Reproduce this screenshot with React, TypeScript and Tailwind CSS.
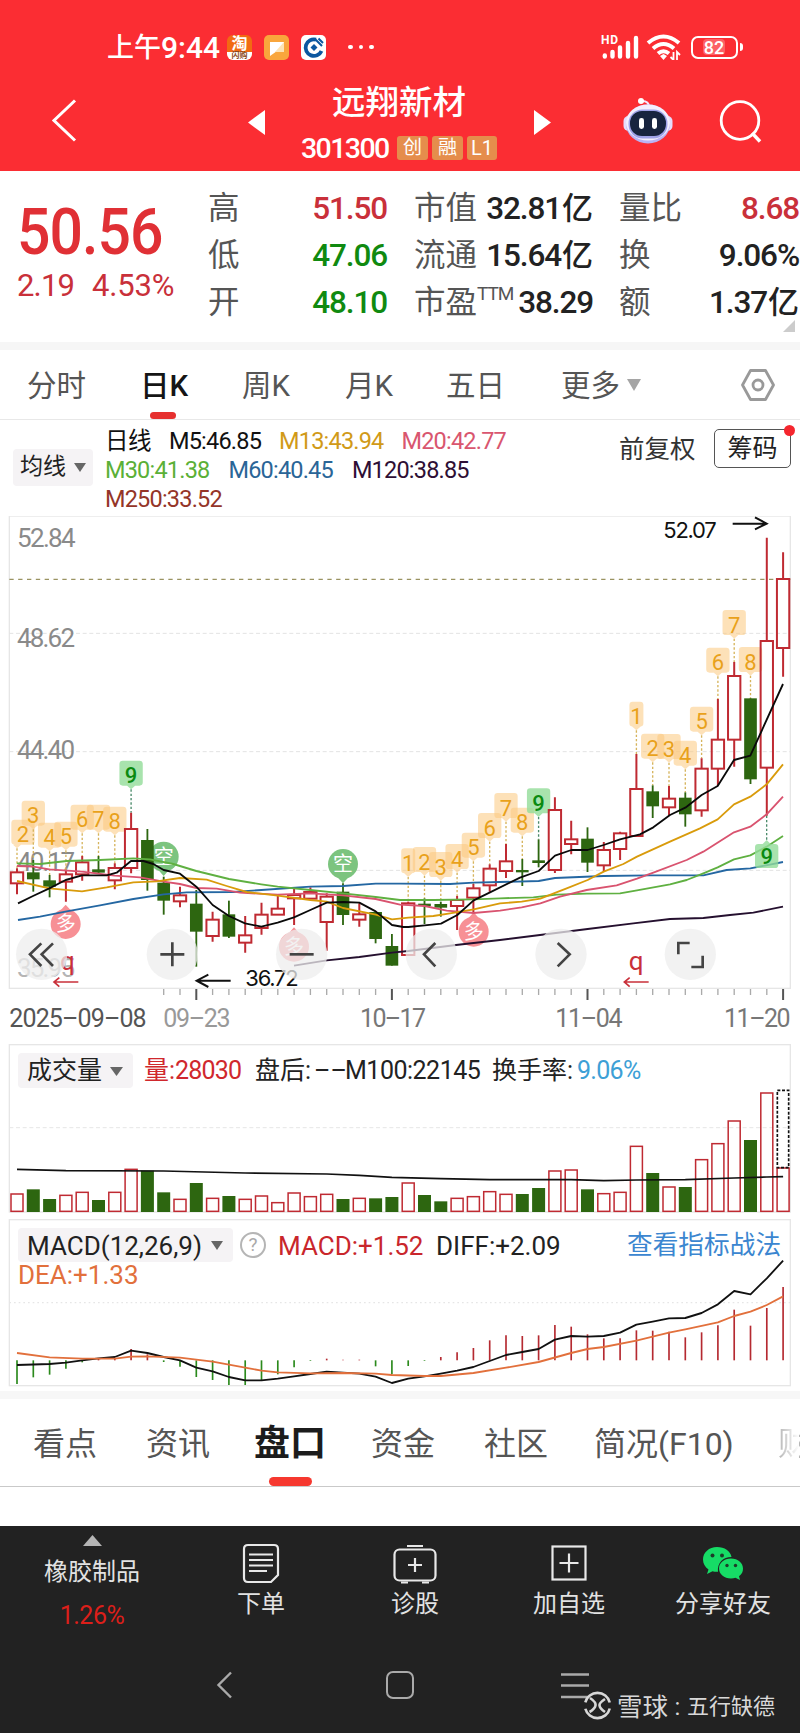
/**
 * 个股行情页：日K、成交量、MACD
 */

type Point = [number, number];

// 图表坐标统一用 3 倍像素
const STEP = 48.9;
const cx = (i: number) => 51 + STEP * i;
const RED = '#bf2a32';
const GREEN = '#2d6610';

// [方向, 实体上, 实体下, 影线上, 影线下]
const candles: [number, number, number, number, number][] = [
  [1, 277, 310, 265, 343],
  [0, 277, 298, 240, 335],
  [0, 301, 320, 285, 352],
  [1, 283, 305, 270, 365],
  [1, 247, 283, 228, 302],
  [0, 268, 278, 228, 280],
  [1, 264, 301, 250, 328],
  [1, 147, 264, 98, 280],
  [0, 180, 300, 147, 332],
  [0, 308, 362, 290, 404],
  [1, 346, 364, 320, 382],
  [0, 371, 455, 330, 560],
  [1, 419, 468, 395, 485],
  [0, 403, 470, 362, 474],
  [1, 466, 488, 408, 518],
  [1, 404, 444, 368, 464],
  [1, 386, 404, 345, 404],
  [1, 345, 355, 325, 435],
  [1, 336, 356, 322, 356],
  [1, 350, 426, 340, 512],
  [0, 335, 405, 310, 435],
  [1, 403, 419, 370, 440],
  [0, 396, 477, 396, 490],
  [0, 498, 557, 462, 557],
  [1, 370, 525, 365, 525],
  [0, 371, 378, 355, 432],
  [0, 372, 383, 365, 410],
  [1, 360, 378, 348, 450],
  [1, 325, 353, 312, 400],
  [1, 266, 316, 253, 335],
  [1, 244, 273, 192, 294],
  [0, 270, 277, 237, 318],
  [0, 241, 249, 178, 262],
  [1, 90, 270, 52, 279],
  [1, 178, 192, 122, 223],
  [0, 176, 248, 142, 276],
  [1, 210, 256, 186, 275],
  [1, 160, 207, 155, 240],
  [1, 27, 168, -78, 170],
  [0, 34, 79, 16, 114],
  [1, 56, 82, 18, 107],
  [0, 53, 103, 37, 140],
  [1, -34, 91, -65, 110],
  [1, -121, -34, -243, 17],
  [1, -312, -121, -354, -40],
  [0, -245, -2, -245, 12],
  [1, -417, -37, -727, 107],
  [1, -603, -396, -683, -310],
];

const averages: { color: string; points: Point[] }[] = [
  {
    color: '#2467a2',
    points: [[54, 420], [120, 410], [200, 394], [300, 376], [400, 357], [491, 343], [560, 337], [700, 336], [784, 330], [931, 320], [1029, 318], [1127, 311], [1200, 311], [1350, 312], [1421, 308], [1500, 306], [1616, 303], [1665, 294], [1811, 288], [1950, 286], [2110, 286], [2180, 270], [2251, 265], [2310, 254], [2349, 246]],
  },
  {
    color: '#25102f',
    points: [[882, 557], [980, 541], [1078, 531], [1176, 518], [1225, 513], [1368, 495], [1500, 480], [1620, 465], [1763, 447], [1900, 430], [2010, 417], [2110, 414], [2190, 405], [2260, 398], [2349, 380]],
  },
  {
    color: '#5fb041',
    points: [[51, 250], [120, 252], [200, 243], [300, 240], [400, 235], [450, 238], [520, 252], [589, 273], [687, 297], [784, 313], [833, 320], [931, 330], [1029, 340], [1127, 351], [1200, 360], [1300, 360], [1421, 358], [1500, 355], [1600, 352], [1670, 344], [1760, 341], [1860, 340], [1911, 331], [2010, 313], [2060, 300], [2110, 280], [2153, 262], [2202, 238], [2251, 226], [2300, 200], [2349, 168]],
  },
  {
    color: '#d9536f',
    points: [[51, 258], [100, 260], [148, 268], [246, 275], [344, 287], [420, 292], [491, 305], [540, 312], [589, 324], [650, 326], [720, 338], [833, 344], [931, 340], [1029, 346], [1127, 357], [1200, 374], [1274, 378], [1340, 392], [1421, 399], [1500, 392], [1565, 382], [1621, 370], [1680, 350], [1760, 330], [1850, 316], [1911, 296], [1960, 278], [2060, 240], [2110, 215], [2202, 157], [2251, 140], [2300, 103], [2349, 50]],
  },
  {
    color: '#d99b0b',
    points: [[51, 303], [148, 325], [246, 334], [320, 322], [400, 307], [470, 304], [540, 294], [620, 299], [680, 318], [740, 336], [833, 347], [931, 360], [980, 365], [1029, 384], [1127, 404], [1176, 418], [1225, 413], [1300, 408], [1350, 400], [1421, 388], [1500, 370], [1565, 365], [1621, 356], [1700, 325], [1763, 300], [1811, 275], [1870, 252], [1911, 230], [2010, 185], [2100, 145], [2153, 118], [2202, 73], [2251, 50], [2300, 13], [2349, -47]],
  },
  {
    color: '#0a0a0a',
    points: [[54, 370], [99, 348], [148, 325], [197, 300], [246, 286], [320, 286], [350, 278], [393, 243], [430, 243], [460, 252], [491, 270], [540, 281], [589, 320], [638, 375], [687, 408], [735, 430], [784, 440], [833, 428], [882, 412], [931, 390], [980, 368], [1029, 366], [1078, 368], [1127, 394], [1176, 435], [1210, 441], [1225, 441], [1274, 436], [1323, 431], [1372, 405], [1421, 361], [1470, 337], [1560, 293], [1616, 273], [1665, 227], [1714, 210], [1763, 210], [1811, 195], [1860, 178], [1920, 163], [1960, 142], [2010, 105], [2056, 83], [2105, 45], [2153, 18], [2202, -60], [2251, -73], [2349, -288]],
  },
];

// 九转序列 [K线序号, 数字, 气泡上沿]
const turns: [number, string, number][] = [
  [0, '2', 119],
  [1, '3', 62],
  [2, '4', 128],
  [3, '5', 125],
  [4, '6', 74],
  [5, '7', 74],
  [6, '8', 80],
  [7, '9', -58],
  [24, '1', 205],
  [25, '2', 201],
  [26, '3', 216],
  [27, '4', 192],
  [28, '5', 158],
  [29, '6', 99],
  [30, '7', 39],
  [31, '8', 83],
  [32, '9', 25],
  [38, '1', -235],
  [39, '2', -139],
  [40, '3', -138],
  [41, '4', -118],
  [42, '5', -220],
  [43, '6', -397],
  [44, '7', -510],
  [45, '8', -399],
];

const volumes: [number, number][] = [
  [1, 462], [0, 448], [0, 477], [1, 466], [1, 457], [0, 480], [1, 457], [1, 388],
  [0, 392], [0, 457], [1, 478], [0, 429], [1, 475], [0, 468], [1, 478], [1, 468],
  [1, 488], [1, 459], [1, 470], [1, 463], [0, 477], [1, 475], [0, 475], [0, 471],
  [1, 429], [0, 465], [0, 484], [1, 475], [1, 470], [1, 455], [1, 463], [0, 462],
  [0, 444], [1, 393], [1, 390], [0, 448], [1, 461], [1, 457], [1, 319], [0, 399],
  [1, 441], [0, 441], [1, 359], [1, 311], [1, 243], [0, 300], [1, 159], [1, 384],
];

const volumeAverage: Point[] = [
  [0, 388], [3, 392], [9, 393], [14, 399], [19, 402], [21, 406], [23, 412], [26, 416],
  [29, 419], [34, 419], [36, 422], [38, 420], [41, 419], [44, 414], [46, 411], [47, 410],
];

const macd = [
  507, 487, 479, 461, 442, 431, 430, 402, 418, 441, 455, 486, 495, 510, 510, 495, 478, 457, 438,
  431, 434, 434, 454, 478, 453, 438, 426, 412, 399, 376, 361, 363, 361, 330, 335, 358, 370, 370,
  346, 347, 350, 367, 352, 331, 284, 332, 279, 216,
];

const diff: Point[] = [
  [0, 450], [2, 447], [3, 443], [4, 436], [5, 430], [6, 426], [7, 407], [8, 414], [9, 426],
  [10, 436], [11, 458], [12, 469], [13, 486], [14, 496], [15, 496], [16, 491], [17, 484],
  [18, 477], [19, 470], [20, 473], [21, 476], [22, 485], [23, 504], [24, 491], [25, 484],
  [26, 476], [27, 467], [28, 456], [29, 438], [30, 420], [31, 411], [32, 402], [33, 374],
  [34, 363], [35, 365], [36, 363], [37, 353], [38, 329], [39, 320], [40, 310], [41, 309],
  [42, 294], [43, 268], [44, 228], [45, 238], [46, 190], [47, 137],
];

const dea: Point[] = [
  [0, 414], [2, 427], [4, 431], [6, 431], [7, 425], [8, 424], [10, 428], [12, 440], [14, 458],
  [15, 467], [16, 472], [18, 475], [20, 474], [22, 476], [23, 480], [25, 483], [26, 483],
  [28, 474], [30, 458], [32, 441], [34, 414], [35, 402], [36, 396], [38, 377], [40, 353],
  [41, 343], [43, 322], [44, 303], [45, 290], [46, 270], [47, 244],
];

const line = (points: Point[]) => points.map((p) => p.join(',')).join(' ');
const byIndex = (points: Point[]) => line(points.map(([i, y]) => [cx(i), y]));

function Caret({ className }: { className: string }) {
  return (
    <svg className={className} preserveAspectRatio="none" viewBox="0 0 12 10">
      <path d="M0 0H12L6 10Z" fill="currentColor" />
    </svg>
  );
}

function StatusBar() {
  return (
    <div className="flex h-[94px] items-center pl-[107px]">
      <span className="w-[54px] whitespace-nowrap pt-[2px] font-medium text-[27px] leading-none">上午</span>
      <span className="w-[66px] pt-[2px] font-medium text-[30px] leading-none">9:44</span>
      <div className="mr-3 flex size-[25px] flex-col overflow-hidden rounded-md bg-[#f26a12] text-center">
        <span className="h-[17px] font-bold text-[16px] leading-[17px]">淘</span>
        <span className="h-2 whitespace-nowrap bg-white font-bold text-[#8a4b20] text-[8px] leading-[8px]">
          闪购
        </span>
      </div>
      <svg className="mr-3 size-[25px]" viewBox="0 0 25 25">
        <rect fill="#f9a63c" height="25" rx="5" width="25" />
        <path d="M6 7H20V17L13 16L6 21Z" fill="#fff" />
        <path d="M20 7V17H11Z" fill="#fde3b5" />
      </svg>
      <svg className="mr-[22px] size-[25px]" viewBox="0 0 25 25">
        <rect fill="#fff" height="25" rx="5" width="25" />
        <path d="M15 4.600A8.300 8.300 0 1 0 20.500 16" fill="none" stroke="#0b57a0" strokeWidth="3.800" />
        <path d="M12.500 7.500L17.500 12.500L12.500 17.500L7.500 12.500Z" fill="#fff" />
        <path d="M13 9L16.500 12.500L13 16L9.500 12.500Z" fill="#0b57a0" />
        <path d="M14 4L21 11M17.500 3.500L22 8" stroke="#0b57a0" strokeWidth="2" />
      </svg>
      <div className="flex gap-[6px]">
        <i className="size-[4.5px] rounded-full bg-white" />
        <i className="size-[4.5px] rounded-full bg-white" />
        <i className="size-[4.5px] rounded-full bg-white" />
      </div>
      <svg className="ml-[227px] h-[26px] w-[38px]" viewBox="0 0 38 26">
        <text fill="#fff" fontSize="12" fontWeight="700" textLength="17" x="0" y="10">
          HD
        </text>
        <path
          d="M3.800 22.500V21.500M11.500 22.500V18M19 22.500V13.500M27 22.500V9M35 22.500V4"
          stroke="#fff"
          strokeLinecap="round"
          strokeWidth="4.400"
        />
      </svg>
      <svg className="ml-[7px] h-[26px] w-[35px]" fill="none" viewBox="0 0 35 26">
        <path
          d="M2 9Q17.500 -4 33 9M7 14.500Q17.500 5.500 28 14.500M12 19.500Q17.500 15 23 19.500"
          stroke="#fff"
          strokeWidth="4"
        />
        <path d="M14 22L17.500 26L21 22L17.500 20Z" fill="#fff" />
        <path d="M27.500 18V26L24.500 23M31 26V18L34 21" stroke="#fff" strokeWidth="1.800" />
      </svg>
      <div className="ml-[10px] flex h-[23px] w-[47px] items-center justify-center rounded-[7px] border-2 border-white">
        <span className="h-[16px] rounded-sm bg-white/25 px-px font-medium text-[18px] leading-[17px]">82</span>
      </div>
      <i className="ml-[2px] h-2 w-[3px] rounded-r bg-white" />
    </div>
  );
}

function Header() {
  return (
    <header className="h-[171px] bg-[#fb2d33] text-white">
      <StatusBar />
      <div className="flex h-[77px] items-start">
        <svg className="mt-[5px] ml-[51px] h-[43px] w-[26px]" fill="none" viewBox="0 0 26 43">
          <path d="M24 1.500L3 21.500L24 41.500" stroke="#fff" strokeWidth="3" />
        </svg>
        <svg className="mt-[16px] ml-[171px] h-[25px] w-[17px]" viewBox="0 0 17 25">
          <path d="M17 0V25L0 12.500Z" fill="#fff" />
        </svg>
        <div className="-mt-[9px] flex w-[269px] flex-col items-center pr-[1px]">
          <h1 className="font-medium text-[33.500px] leading-[36px]">远翔新材</h1>
          <div className="mt-[13px] flex items-center gap-1">
            <span className="mr-[4px] w-[88px] pt-[3px] font-medium text-[28.500px] leading-[24px] tracking-[-1.600px]">
              301300
            </span>
            <span className="h-6 w-[31px] rounded-[3px] bg-[#e58d4c] text-center text-[19px] leading-[24px]">创</span>
            <span className="h-6 w-[31px] rounded-[3px] bg-[#e58d4c] text-center text-[19px] leading-[24px]">融</span>
            <span className="h-6 w-[30px] rounded-[3px] bg-[#e58d4c] text-center text-[20px] leading-[25px]">L1</span>
          </div>
        </div>
        <svg className="mt-[16px] h-[25px] w-[17px]" viewBox="0 0 17 25">
          <path d="M0 0V25L17 12.500Z" fill="#fff" />
        </svg>
        <svg className="mt-[3px] ml-[72px] h-[47px] w-[50px]" viewBox="0 0 50 47">
          <path d="M26 10Q26 4 19 4" fill="none" stroke="#f4e8ff" strokeWidth="2" />
          <circle cx="18" cy="4" fill="#fff" r="3" />
          <rect fill="#e6dcfb" height="15" rx="5" width="49" x="0.500" y="19" />
          <ellipse cx="25" cy="27" fill="#b9b3f4" rx="22" ry="19.500" />
          <ellipse cx="25" cy="25.500" fill="#f3effe" rx="22" ry="18" />
          <rect fill="#9fa2e8" height="29" rx="14" width="39" x="5.500" y="12.500" />
          <rect fill="#18243f" height="25" rx="12" width="36" x="7" y="14" />
          <rect fill="#fff" height="11" rx="2.400" width="5" x="16" y="21" />
          <rect fill="#fff" height="11" rx="2.400" width="5" x="29" y="21" />
        </svg>
        <svg className="mt-[6px] ml-[46px] h-[43px] w-[44px]" fill="none" viewBox="0 0 44 43">
          <circle cx="21" cy="20.500" r="18.800" stroke="#fff" strokeWidth="2.800" />
          <path d="M33 33L41 41.500" stroke="#fff" strokeWidth="3.400" />
        </svg>
      </div>
    </header>
  );
}

function Stat({ label, value, tone }: { label: string; value: string; tone: string }) {
  const unit = value.endsWith('亿');
  return (
    <div className="flex h-[47px] items-center justify-between whitespace-nowrap">
      <span className="flex text-[#555] text-[31.500px]">
        {label}
        {label === '市盈' && <sup className="top-0 pt-[1px] text-[19px] leading-[28px] tracking-[-1px]">TTM</sup>}
      </span>
      <span className={tone}>
        <span className="font-medium text-[31.500px] tracking-[-1.100px]">{unit ? value.slice(0, -1) : value}</span>
        {unit && <span className="ml-px font-medium text-[31px]">亿</span>}
      </span>
    </div>
  );
}

function Quote() {
  return (
    <section className="relative flex h-[179px] border-[#f6f6f6] border-b-8 bg-white pt-[14px]">
      <div className="w-[208px] pl-[17px] text-[#e03035]">
        <div className="mt-[16px] w-[158px] origin-left scale-x-[0.92] font-medium text-[64px] leading-[64px] tracking-[-1px]">
          50.56
        </div>
        <div className="mt-[5px] flex text-[#c9303a] text-[31px] leading-[32px]">
          <span className="w-[75px] tracking-[-0.800px]">2.19</span>
          <span className="tracking-[-0.200px]">4.53%</span>
        </div>
      </div>
      <div className="w-[179px]">
        <Stat label="高" tone="text-[#c9303a]" value="51.50" />
        <Stat label="低" tone="text-[#108a10]" value="47.06" />
        <Stat label="开" tone="text-[#108a10]" value="48.10" />
      </div>
      <div className="ml-[27px] w-[179px]">
        <Stat label="市值" tone="text-[#222]" value="32.81亿" />
        <Stat label="流通" tone="text-[#222]" value="15.64亿" />
        <Stat label="市盈" tone="text-[#222]" value="38.29" />
      </div>
      <div className="ml-[26px] w-[180px]">
        <Stat label="量比" tone="text-[#c9303a]" value="8.68" />
        <Stat label="换" tone="text-[#222]" value="9.06%" />
        <Stat label="额" tone="text-[#222]" value="1.37亿" />
      </div>
      <svg className="absolute right-[5px] bottom-[10px] size-3" viewBox="0 0 12 12">
        <path d="M12 0V12H0Z" fill="#ccc" />
      </svg>
    </section>
  );
}

function PeriodTabs() {
  return (
    <nav className="flex h-[70px] items-center whitespace-nowrap border-[#e8e8e8] border-b pl-[27px] text-[#555] text-[29.500px]">
      <span className="w-[113px] pt-[3px]">分时</span>
      <span className="relative flex h-full w-[102px] items-center pt-[3px] font-medium text-[#151515]">
        日<span className="tracking-[-1px]">K</span>
        <i className="absolute bottom-0 left-[10px] h-[7px] w-[26px] rounded-full bg-[#e6302f]" />
      </span>
      <span className="w-[103px] pt-[3px]">周K</span>
      <span className="w-[101px] pt-[3px]">月K</span>
      <span className="w-[115px] pt-[3px]">五日</span>
      <span className="w-[66px] pt-[3px]">更多</span>
      <Caret className="h-3 w-[14px] text-[#a5a5a5]" />
      <svg className="ml-[100px] h-[32px] w-[34px]" fill="none" viewBox="0 0 34 32">
        <path d="M9.500 1.500H24.500L32.500 16L24.500 30.500H9.500L1.500 16Z" stroke="#999" strokeLinejoin="round" strokeWidth="2.800" />
        <circle cx="17" cy="16" r="5" stroke="#999" strokeWidth="2.800" />
      </svg>
    </nav>
  );
}

function AverageLegend() {
  return (
    <div className="flex h-[96px] whitespace-nowrap">
      <div className="mt-[29px] ml-[13px] flex h-[37px] w-[80px] items-center gap-2 rounded bg-[#f5f3f5] pl-[7px] text-[#222] text-[23px]">
        均线
        <Caret className="h-[9px] w-[12px] text-[#666]" />
      </div>
      <div className="mt-[7px] ml-[12px] w-[514px] text-[23.500px] leading-[29px] tracking-[-0.800px]">
        <div className="flex gap-[18px]">
          <span className="text-[#111] tracking-[-0.500px]">日线</span>
          <span className="text-[#111]">M5:46.85</span>
          <span className="text-[#d19a18]">M13:43.94</span>
          <span className="text-[#d9566f]">M20:42.77</span>
        </div>
        <div className="flex gap-[19px]">
          <span className="text-[#5bb037]">M30:41.38</span>
          <span className="text-[#2a6597]">M60:40.45</span>
          <span className="text-[#2e0f35]">M120:38.85</span>
        </div>
        <div className="text-[#943528]">M250:33.52</div>
      </div>
      <div className="mt-[10px] flex h-[38px] w-[95px] items-center text-[#333] text-[25.500px]">前复权</div>
      <div className="relative mt-[9px] flex h-[39px] w-[77px] items-center justify-center rounded-[5px] border border-[#555] text-[#222] text-[25px]">
        筹码
        <i className="absolute -top-[5px] -right-[5px] size-[11px] rounded-full bg-[#f5262e]" />
      </div>
    </div>
  );
}

function Turn({ i, n, top }: { i: number; n: string; top: number }) {
  const x = cx(i);
  const nine = n === '9';
  const w = n === '1' ? 42 : 70;
  const left = x - w / 2 + (i === 0 ? 18 : 0);
  return (
    <g>
      <path
        d={`M${x} ${top + 86}V${candles[i][3]}`}
        stroke={nine ? '#4b8b6b' : '#d6b45c'}
        strokeDasharray="7 6"
        strokeWidth="4"
      />
      <g fill={nine ? '#92dc98' : '#fbc97e'} opacity={nine ? 0.8 : 0.55}>
        <path
          d={`M${left + 10} ${top}H${left + w - 10}Q${left + w} ${top} ${left + w} ${top + 10}V${top + 65}Q${left + w} ${top + 75} ${left + w - 10} ${top + 75}H${x + 12}L${x} ${top + 86}L${x - 12} ${top + 75}H${left + 10}Q${left} ${top + 75} ${left} ${top + 65}V${top + 10}Q${left} ${top} ${left + 10} ${top}Z`}
        />
      </g>
      <text
        fill={nine ? '#0a8a10' : '#e9a11b'}
        fontSize="66"
        fontWeight={nine ? 500 : 400}
        textAnchor="middle"
        x={left + w / 2}
        y={top + 68}
      >
        {n}
      </text>
    </g>
  );
}

function Pin({ x, y, label, up }: { x: number; y: number; label: string; up?: boolean }) {
  const tip = up ? -1 : 1;
  return (
    <g>
      <g fill={up ? '#f79095' : '#7cc47f'}>
        <circle cx={x} cy={y} r="45" />
        <path d={`M${x - 18} ${y + tip * 38}H${x + 18}L${x} ${y + tip * 58}Z`} />
      </g>
      <text fill="#fff" fontSize="60" textAnchor="middle" x={x} y={y + 22}>
        {label}
      </text>
    </g>
  );
}

const dates: [string, number, number, string][] = [
  ['2025-09-08', 28, 412, '#555'],
  ['09-23', 490, 202, '#999'],
  ['10-17', 1080, 198, '#777'],
  ['11-04', 1666, 202, '#777'],
  ['11-20', 2172, 200, '#777'],
];

const controls: [number, string][] = [
  [125, 'M-1 -33L-35 0L-1 35M34 -33L0 0L34 35'],
  [517, 'M-36 0H36M0 -36V36'],
  [905, 'M-36 0H36'],
  [1294, 'M12 -34L-22 0L12 36'],
  [1683, 'M-10 -34L26 0L-10 36'],
  [2071, 'M-36 0V-34H-2M37 4V38H3'],
];

function CandleChart() {
  return (
    <svg className="block h-[524px] w-[800px]" viewBox="0 -792 2400 1572">
      <rect fill="none" height="1417" stroke="#e6e6e6" strokeWidth="4" width="2343" x="28" y="-792" />
      <g stroke="#e3e3e3" strokeDasharray="12 8" strokeWidth="3">
        <path d="M28 -440H2371M28 -85H2371M28 271H2371" />
      </g>
      <path d="M28 -602H2371" stroke="#9a9361" strokeDasharray="13 13.500" strokeWidth="4" />

      <g fill="#8a8a8a" fontSize="78">
        <text textLength="176" x="51" y="-699">52.84</text>
        <text textLength="174" x="51" y="-399">48.62</text>
        <text textLength="174" x="51" y="-64">44.40</text>
        <text textLength="174" x="51" y="274">40.17</text>
        <text fill="#b5b5b5" textLength="174" x="51" y="591">35.95</text>
      </g>

      {turns.map(([i, n, top]) => (
        <Turn i={i} key={i} n={n} top={top} />
      ))}

      <Pin label="空" x={491} y={230} />
      <Pin label="空" x={1029} y={252} />
      <Pin label="多" up x={197} y={432} />
      <Pin label="多" up x={882} y={500} />
      <Pin label="多" up x={1421} y={455} />

      {candles.map(([up, top, bottom, high, low], i) => {
        const x = cx(i);
        return up ? (
          <g fill="none" key={i} stroke={RED} strokeWidth="6">
            <path d={`M${x} ${high}V${top}M${x} ${bottom}V${low}`} />
            <rect height={Math.max(bottom - top, 4)} width="37" x={x - 18.5} y={top} />
          </g>
        ) : (
          <g fill={GREEN} key={i}>
            <path d={`M${x} ${high}V${low}`} stroke={GREEN} strokeWidth="5.500" />
            <rect height={bottom - top} width="38" x={x - 19} y={top} />
          </g>
        );
      })}

      {averages.map(({ color, points }) => (
        <polyline fill="none" key={color} points={line(points)} stroke={color} strokeLinejoin="round" strokeWidth="5.500" />
      ))}

      <path d="M2300 107V180" stroke="#4b8b6b" strokeDasharray="7 6" strokeWidth="4" />
      <path d="M2275 192H2288L2300 180L2312 192H2325Q2335 192 2335 202V254Q2335 264 2325 264H2275Q2265 264 2265 254V202Q2265 192 2275 192Z" fill="#92dc98" opacity="0.8" />
      <text fill="#0a8a10" fontSize="66" fontWeight="500" textAnchor="middle" x="2300" y="253">9</text>

      <g fill="#111" fontFamily='Inter, "Noto Sans", sans-serif' fontSize="66">
        <text textLength="160" x="1990" y="-726">52.07</text>
        <text textLength="160" x="736" y="619">36.72</text>
      </g>
      <path d="M2198 -769H2296M2265 -788L2300 -769L2265 -752" fill="none" stroke="#111" strokeWidth="6" />
      <path d="M692 602H592M625 584L590 602L625 621" fill="none" stroke="#111" strokeWidth="6" />

      <g fill="none" stroke="#c9303a" strokeWidth="5">
        <path d="M235 606H163M178 593L162 606L178 620" />
        <path d="M1946 606H1874M1889 593L1873 606L1889 620" />
      </g>
      <text fill="#c9303a" fontSize="78" x="1886" y="569">q</text>
      <text fill="#c9303a" fontSize="78" x="180" y="570">q</text>

      {controls.map(([x, d]) => (
        <g key={x} transform={`translate(${x} 523)`}>
          <circle fill="#ededed" opacity="0.75" r="77" />
          <path d={d} fill="none" stroke="#444" strokeWidth="8" />
        </g>
      ))}

      {candles.map((_, i) => {
        if (i < 9) return null;
        const major = i === 11 || i === 23 || i === 35 || i === 47;
        return (
          <path
            d={`M${cx(i)} 627V${major ? 660 : 645}`}
            key={i}
            stroke={major ? '#555' : '#aaa'}
            strokeWidth={major ? 6 : 4}
          />
        );
      })}
      <g fontSize="75">
        {dates.map(([text, x, w, color]) => (
          <text fill={color} key={text} lengthAdjust="spacing" textLength={w} x={x} y="741">
            {text.replace(/-/g, '–')}
          </text>
        ))}
      </g>
    </svg>
  );
}

function VolumePanel() {
  return (
    <section className="grid h-[175px]">
      <svg className="col-start-1 row-start-1 h-[175px] w-[800px]" viewBox="0 0 2400 525">
        <rect fill="none" height="502" stroke="#e6e6e6" strokeWidth="4" width="2343" x="28" y="14" />
        <path d="M28 263H2371" stroke="#e6e6e6" strokeDasharray="12 8" strokeWidth="3" />
        {volumes.map(([up, top], i) =>
          up ? (
            <rect fill="none" height={514 - top} key={i} stroke={RED} strokeWidth="4.500" width="36" x={cx(i) - 18} y={top} />
          ) : (
            <rect fill={GREEN} height={516 - top} key={i} width="39" x={cx(i) - 19.5} y={top} />
          ),
        )}
        <rect fill="none" height="232" stroke="#111" strokeDasharray="9 5" strokeWidth="5" width="34" x="2332" y="151" />
        <polyline fill="none" points={byIndex(volumeAverage)} stroke="#111" strokeWidth="5" />
      </svg>
      <div className="col-start-1 row-start-1 mt-[13px] flex h-[35px] items-center whitespace-nowrap pl-[18px] text-[#222] text-[25px]">
        <span className="mr-[11px] flex h-full w-[115px] items-center gap-2 rounded bg-[#f5f3f5] pt-px pl-[9px]">
          成交量
          <Caret className="h-[9px] w-[13px] text-[#666]" />
        </span>
        <span className="w-[111px] pt-px text-[#d0282d]">
          量:<span className="tracking-[-0.800px]">28030</span>
        </span>
        <span className="w-[59px] pt-px">盘后:</span>
        <span className="w-[31px] pt-px">––</span>
        <span className="w-[147px] pt-px tracking-[-0.500px]">M100:22145</span>
        <span className="w-[85px] pt-px">换手率:</span>
        <span className="pt-px text-[#3da0d6] tracking-[-0.700px]">9.06%</span>
      </div>
    </section>
  );
}

function MacdPanel() {
  return (
    <section className="grid h-[184px] border-[#f7f7f7] border-b-8">
      <svg className="col-start-1 row-start-1 h-[176px] w-[800px]" viewBox="0 0 2400 528">
        <rect fill="none" height="498" stroke="#e6e6e6" strokeWidth="4" width="2343" x="28" y="14" />
        <path d="M28 263H2371" stroke="#e6e6e6" strokeDasharray="5 9" strokeWidth="4" />
        {macd.map((y, i) => (
          <path d={`M${cx(i)} 436V${y}`} key={i} stroke={y < 436 ? '#b52a31' : '#2b8a1c'} strokeWidth="5" />
        ))}
      </svg>
      <div className="col-start-1 row-start-1 mt-[13px] whitespace-nowrap text-[#222] text-[26px]">
        <div className="flex h-[34px] items-center pl-[18px]">
          <span className="mr-[7px] flex h-full w-[215px] items-center rounded bg-[#f5f3f5] pl-[9px]">
            <span className="w-[184px] pt-[2px]">MACD(12,26,9)</span>
            <Caret className="h-[9px] w-[12px] text-[#666]" />
          </span>
          <span className="mr-[12px] flex size-[26px] items-center justify-center rounded-full border-2 border-[#b5b5b5] text-[#aaa] text-[19px]">
            ?
          </span>
          <span className="w-[158px] pt-[2px] text-[#c9262c]">MACD:+1.52</span>
          <span className="w-[191px] pt-[2px]">DIFF:+2.09</span>
          <span className="pt-px text-[#3b86d0] text-[25.700px]">查看指标战法</span>
        </div>
        <div className="pl-[18px] text-[#e2703c] leading-[26px]">DEA:+1.33</div>
      </div>
      <svg className="z-10 col-start-1 row-start-1 h-[176px] w-[800px]" fill="none" viewBox="0 0 2400 528">
        <polyline points={byIndex(diff)} stroke="#111" strokeLinejoin="round" strokeWidth="5.500" />
        <polyline points={byIndex(dea)} stroke="#e2703c" strokeLinejoin="round" strokeWidth="5.500" />
      </svg>
    </section>
  );
}

function SectionTabs() {
  return (
    <nav className="h-[127px] overflow-hidden bg-white">
      <div className="flex h-[88px] items-center overflow-hidden whitespace-nowrap border-[#c9c9c9] border-b pl-[33px] text-[#555] text-[32px]">
        <span className="w-[113px] shrink-0 pt-[3px]">看点</span>
        <span className="w-[108px] shrink-0 pt-[3px]">资讯</span>
        <span className="relative flex h-full w-[117px] shrink-0 items-center pt-[3px] font-bold text-[#1c1c1c] text-[36px]">
          盘口
          <i className="absolute bottom-0 left-[15px] h-[9px] w-[43px] rounded-full bg-[#f6382f]" />
        </span>
        <span className="w-[113px] shrink-0 pt-[3px]">资金</span>
        <span className="w-[110px] shrink-0 pt-[3px]">社区</span>
        <span className="w-[184px] shrink-0 pt-[3px]">简况(F10)</span>
        <span className="bg-gradient-to-r from-[#b5b5b5] to-[#fff] bg-clip-text pt-[3px] text-transparent [background-size:21px]">
          财
        </span>
      </div>
    </nav>
  );
}

function BottomBar() {
  return (
    <footer className="h-[207px] bg-[#222] text-[#e2e2e2] text-[24px]">
      <div className="flex h-[120px] whitespace-nowrap text-center leading-[28px]">
        <div className="flex w-[184px] flex-col items-center pt-[9px]">
          <Caret className="h-[11px] w-[19px] rotate-180 text-[#b5b5b5]" />
          <span className="mt-[12px]">橡胶制品</span>
          <span className="mt-[16px] text-[#dc1f1a] text-[25px] tracking-[-0.500px]">1.26%</span>
        </div>
        <div className="flex w-[154px] flex-col items-center pt-[17px]">
          <svg className="h-[41px] w-[38px]" fill="none" stroke="#e8e8e8" strokeWidth="2.200" viewBox="0 0 38 41">
            <path d="M6 2H32Q36 2 36 6V32L29 39H6Q2 39 2 35V6Q2 2 6 2Z" />
            <path d="M7 11.500H31M7 17H31M7 22.500H31M7 28H25" />
          </svg>
          <span className="mt-[6px]">下单</span>
        </div>
        <div className="flex w-[154px] flex-col items-center pt-[17px]">
          <svg className="h-[41px] w-[44px]" fill="none" stroke="#e8e8e8" strokeWidth="2.200" viewBox="0 0 44 41">
            <rect height="31" rx="5" width="41" x="1.500" y="6.500" />
            <path d="M14 3H30M22 15V29M15 22H29" />
            <path d="M8 39.500H15M29 39.500H36" />
          </svg>
          <span className="mt-[6px]">诊股</span>
        </div>
        <div className="flex w-[154px] flex-col items-center pt-[17px]">
          <svg className="h-[41px] w-[38px]" fill="none" stroke="#e8e8e8" strokeWidth="2.200" viewBox="0 0 38 41">
            <rect height="33" width="33" x="2.500" y="3.500" />
            <path d="M19 10.500V29.500M9.500 20H28.500" />
          </svg>
          <span className="mt-[6px]">加自选</span>
        </div>
        <div className="flex w-[154px] flex-col items-center pt-[17px]">
          <svg className="h-[41px] w-[42px]" viewBox="0 0 42 41">
            <path d="M15 4C7 4 1 9.500 1 16.500C1 20.500 3 24 6.500 26.500L5 31L10.500 28.300Q13 29 16 28.800C15 20 21 14 29.500 14C28.500 8 22.500 4 15 4Z" fill="#16dc66" />
            <path d="M29 15.500C22 15.500 17 20 17 25.500C17 31 22 35.500 29 35.500Q31.500 35.500 33.500 34.700L38 37L37 33.200C40 31.300 41 28.500 41 25.500C41 20 36 15.500 29 15.500Z" fill="#16dc66" />
            <g fill="#1c3d28">
              <circle cx="10.500" cy="12.500" r="2" />
              <circle cx="20" cy="12.500" r="2" />
              <circle cx="25" cy="22.500" r="1.700" />
              <circle cx="33.500" cy="22.500" r="1.700" />
            </g>
          </svg>
          <span className="mt-[6px]">分享好友</span>
        </div>
      </div>
      <div className="flex h-[87px] items-start pt-[24px]">
        <svg className="ml-[216px] h-[30px] w-[17px]" fill="none" viewBox="0 0 17 30">
          <path d="M15 2.500L2.500 15L15 27.500" stroke="#aaa" strokeWidth="2.400" />
        </svg>
        <i className="mt-px ml-[153px] size-[28px] rounded-[7px] border-2 border-[#aaa]" />
        <svg className="mt-px ml-[147px] h-[30px] w-[29px]" viewBox="0 0 29 30">
          <path d="M0 3.500H28M0 14.500H28M0 26H28" stroke="#aaa" strokeWidth="2.400" />
        </svg>
        <svg className="relative mt-[21px] -ml-[7px] size-[29px]" fill="none" stroke="#d8d8d8" viewBox="0 0 29 29">
          <circle cx="14.500" cy="14.500" fill="#222" r="12.600" strokeDasharray="33 6.600" strokeDashoffset="-3" strokeWidth="2.600" />
          <path d="M7 7C10 9 13 12 12.500 14.500S10 19 6.500 21M22 8C19 10 16 12 16.500 14.500S19 19 22 21" strokeWidth="2.600" />
        </svg>
        <span className="mt-[23px] ml-[5px] flex whitespace-nowrap text-[#d8d8d8] leading-[28px]">
          <span className="text-[25.500px]">雪球</span>
          <span className="w-[19px] text-center">:</span>
          <span className="text-[22px]">五行缺德</span>
        </span>
      </div>
    </footer>
  );
}

export default function App() {
  return (
    <div className='w-[800px] overflow-hidden bg-white font-[Roboto,"Noto_Sans_CJK_SC",sans-serif]'>
      <Header />
      <Quote />
      <PeriodTabs />
      <AverageLegend />
      <CandleChart />
      <VolumePanel />
      <MacdPanel />
      <SectionTabs />
      <BottomBar />
    </div>
  );
}
